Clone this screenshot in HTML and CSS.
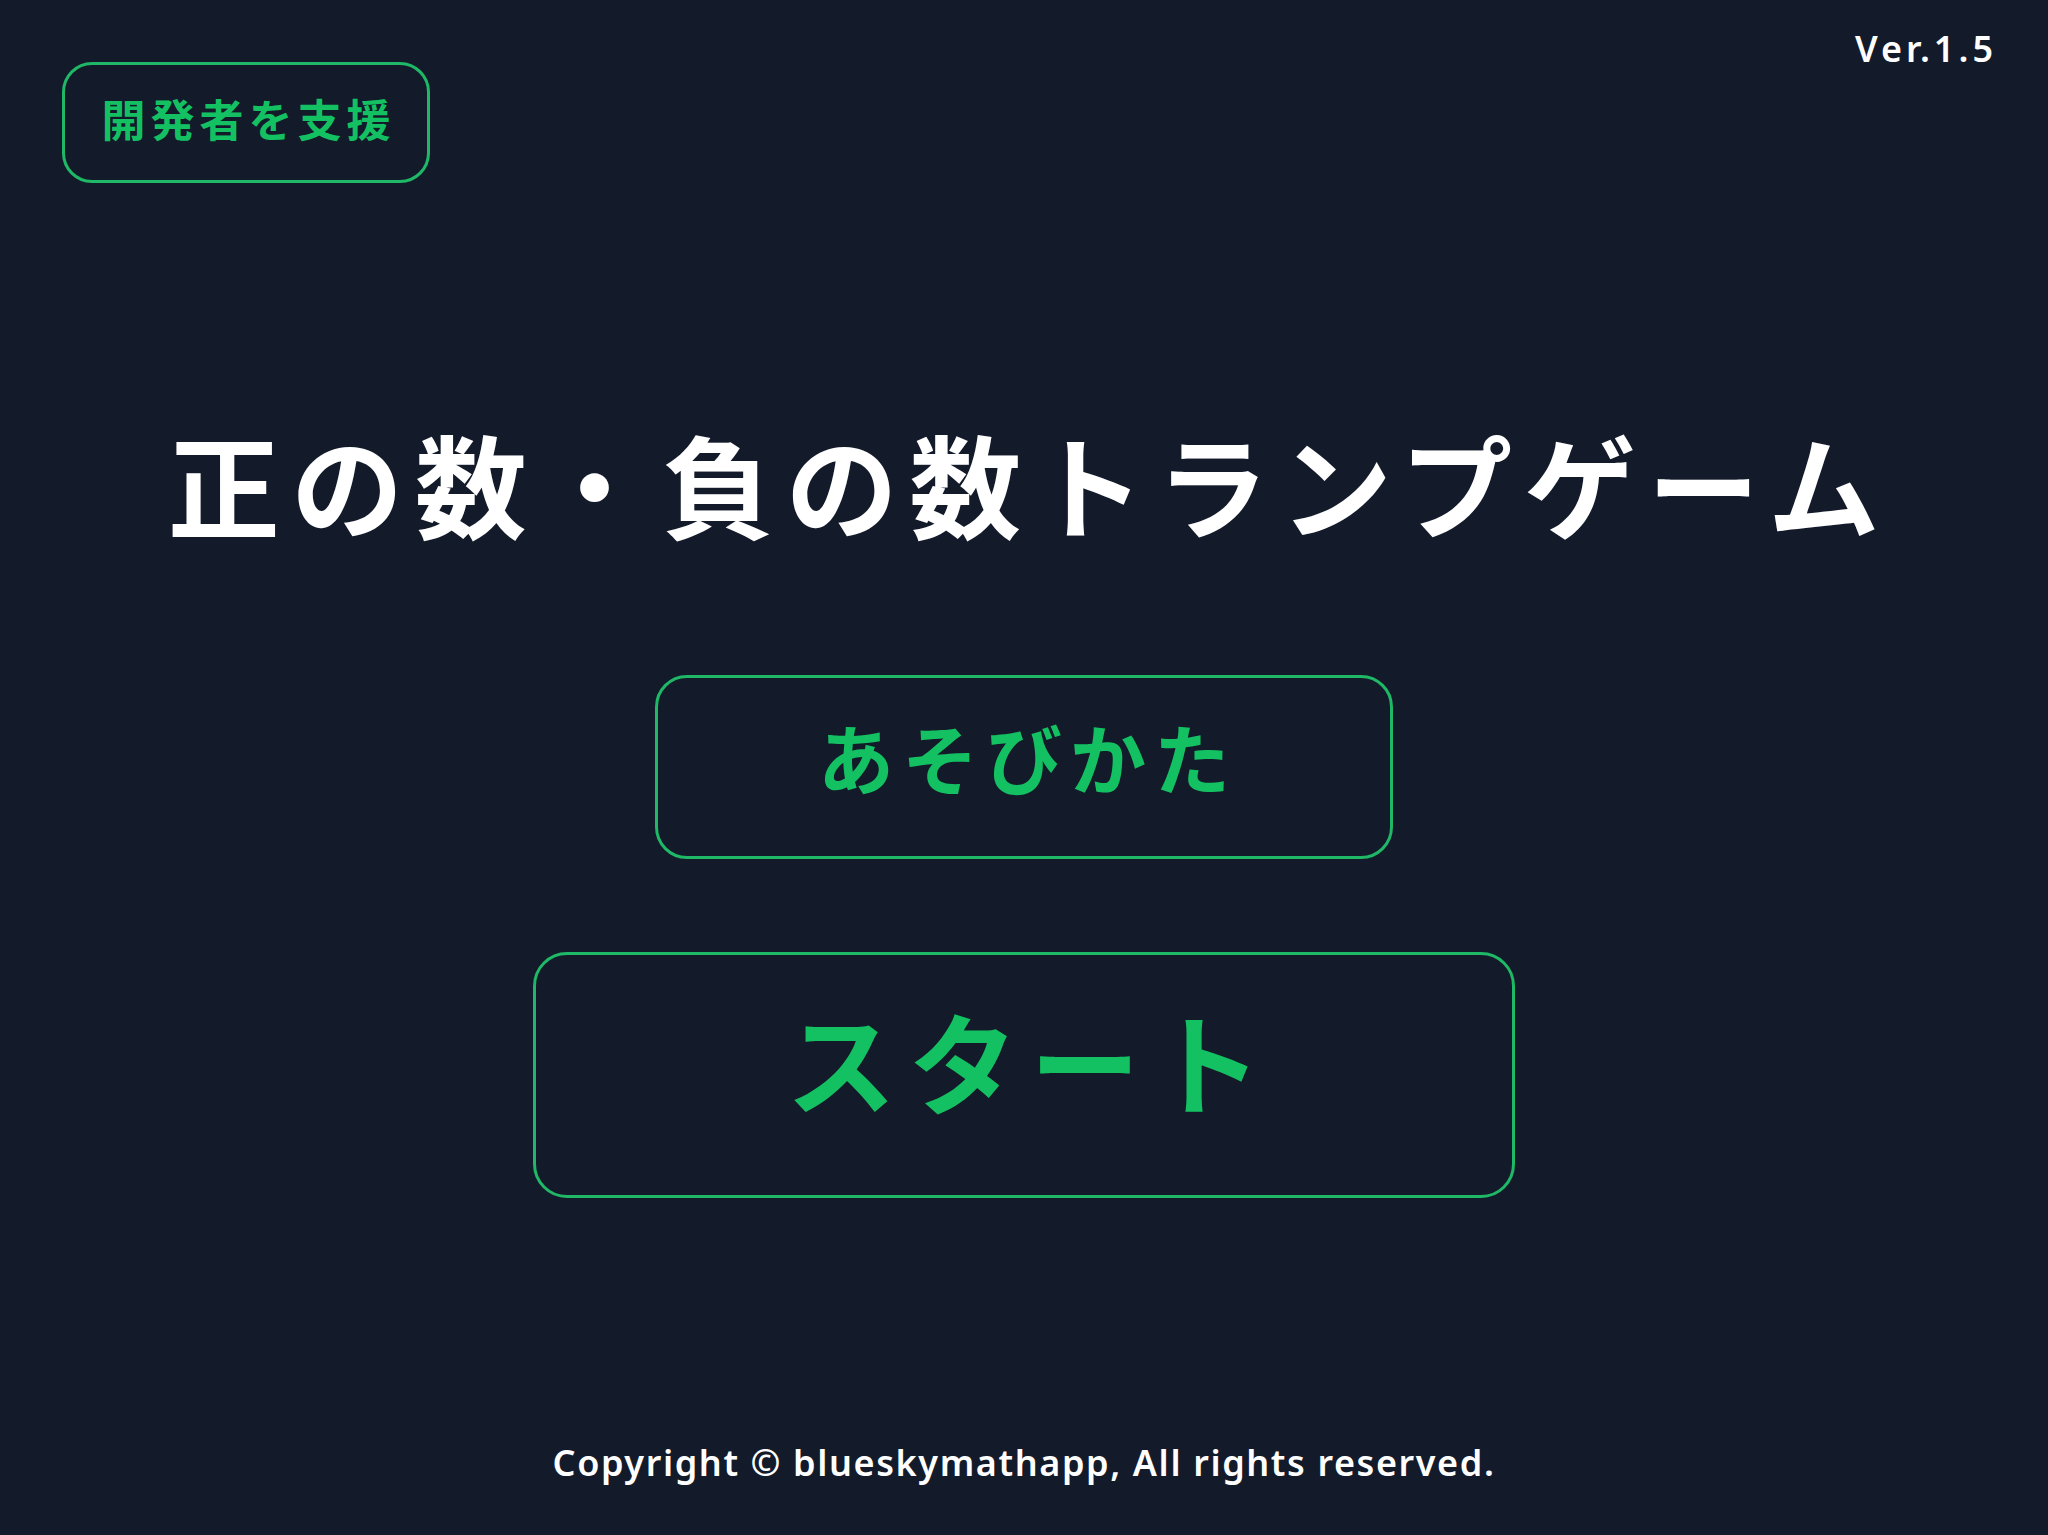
FILE: index.html
```html
<!DOCTYPE html>
<html lang="ja">
<head>
<meta charset="utf-8">
<title>正の数・負の数トランプゲーム</title>
<link rel="stylesheet" href="styles.css">
</head>
<body>
<div class="page">
  <header class="top">
    <a class="support" href="#">開発者を支援</a>
    <span class="version">Ver.1.5</span>
  </header>
  <main class="main">
    <h1 class="title">正の数・負の数トランプゲーム</h1>
    <button class="btn howto" type="button">あそびかた</button>
    <button class="btn start" type="button">スタート</button>
  </main>
  <footer class="copy">Copyright © blueskymathapp, All rights reserved.</footer>
</div>
</body>
</html>
```
FILE: styles.css
```css
html, body {
  margin: 0;
  padding: 0;
  background: #131a2a;
}
body {
  font-family: "Noto Sans CJK JP", "Noto Sans", sans-serif;
  color: #ffffff;
}
.page {
  width: 2048px;
  height: 1535px;
  display: flex;
  flex-direction: column;
  box-sizing: border-box;
}
.top {
  display: flex;
  justify-content: space-between;
  align-items: flex-start;
  padding: 24px 51px 0 62px;
}
.support {
  margin-top: 38px;
  width: 368px;
  height: 121px;
  box-sizing: border-box;
  border: 3px solid #1fb866;
  border-radius: 30px;
  display: flex;
  align-items: center;
  justify-content: center;
  color: #14c162;
  font-size: 44px;
  font-weight: 700;
  letter-spacing: 5px;
  padding: 0 0 10px 5px;
  text-decoration: none;
}
.version {
  font-family: "Noto Sans", sans-serif;
  font-size: 36px;
  font-weight: 600;
  letter-spacing: 4px;
  line-height: 1.4;
}
.main {
  display: flex;
  flex-direction: column;
  align-items: center;
}
.title {
  margin: 232px 0 0 0;
  font-size: 112px;
  font-weight: 700;
  line-height: 134px;
  letter-spacing: 11.6px;
  padding-left: 11px;
  white-space: nowrap;
}
.btn {
  box-sizing: border-box;
  background: transparent;
  border: 3px solid #1fb866;
  color: #14c162;
  font-family: "Noto Sans CJK JP", sans-serif;
  font-weight: 700;
  display: flex;
  align-items: center;
  justify-content: center;
  cursor: pointer;
}
.howto {
  margin-top: 126px;
  width: 738px;
  height: 184px;
  border-radius: 32px;
  font-size: 76px;
  letter-spacing: 8px;
  padding: 0 0 22px 8px;
}
.start {
  margin-top: 93px;
  width: 982px;
  height: 246px;
  border-radius: 34px;
  font-size: 110px;
  letter-spacing: 12px;
  padding: 0 0 32px 12px;
}
.copy {
  margin-top: auto;
  margin-bottom: 48px;
  text-align: center;
  font-family: "Noto Sans", sans-serif;
  font-size: 36px;
  font-weight: 600;
  letter-spacing: 1.6px;
  line-height: 1.3;
}
```
